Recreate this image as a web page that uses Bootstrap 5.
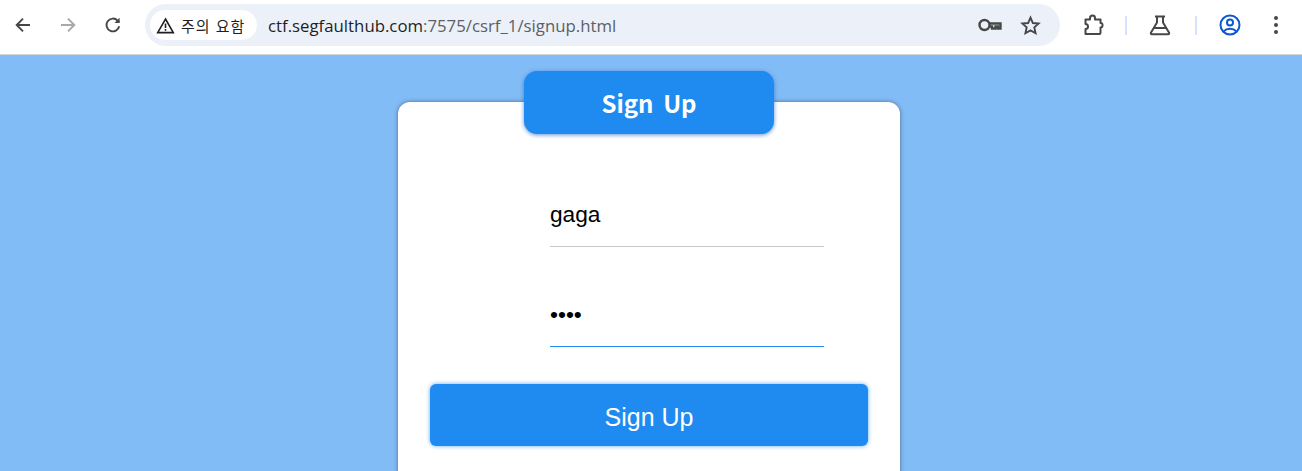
<!DOCTYPE html>
<html lang="ko">
<head>
<meta charset="UTF-8">
<meta name="viewport" content="width=device-width, initial-scale=1.0">
<title>Sign Up</title>
<link href="https://cdn.jsdelivr.net/npm/bootstrap@5.3.0/dist/css/bootstrap.min.css" rel="stylesheet">
<style>
html, body { height: 471px; overflow: hidden; }
body { background: #82bcf6; font-family: "Liberation Sans", Arial, sans-serif; }
.chrome-bar { height: 55px; background: #fff; border-bottom: 1px solid #d3d6db; padding: 0 0 4px 8px; }
.tool-btn { width: 30px; height: 30px; flex: none; }
.tool-btn svg { display: block; }
.back-btn { margin-right: 15px; }
.fwd-btn { margin-right: 15px; }
.reload-btn { margin-right: 17px; }
.omnibox { width: 915px; height: 42px; background: #ecf0f9; border-radius: 21px; padding: 0 19px 0 5px; flex: none; }
.warn-chip { height: 30px; width: 107px; background: #fff; border-radius: 15px; padding-left: 6px; margin-right: 11px; font: 15px "Noto Sans CJK KR", sans-serif; letter-spacing: 1px; color: #1f1f1f; white-space: nowrap; flex: none; }
.warn-chip svg { margin-right: 6px; flex: none; }
.url-text { font: 16.8px "Open Sans", sans-serif; color: #5c5f66; }
.url-text b { font-weight: 400; color: #1f1f1f; }
.key-icon { margin-right: 18px; }
.right-tools { margin-left: 21px; }
.puzzle-icon { margin-right: 20px; }
.flask-icon { margin: 0 23px 0 21px; }
.profile-icon { margin: 0 31px 0 21px; }
.tool-sep { width: 2px; height: 19px; background: #d3e3fd; flex: none; }
.page-area { height: 416px; overflow: hidden; }
.signup-box { width: 502px; height: 420px; margin: 47px 0 0 398px; background: #fff; border-radius: 12px; box-shadow: 0 0 4px rgba(40,50,70,.6); position: relative; padding-top: 91px; }
.tab-head { position: absolute; left: 126px; top: -31px; width: 250px; height: 63px; background: #1f8aef; color: #fff; border-radius: 13px; box-shadow: 0 1px 4px rgba(31,100,200,.7); font: 700 24px/64px "Noto Sans CJK KR", sans-serif; word-spacing: 3px; }
.field-wrap { width: 274px; margin-left: 152px; height: 54px; border-bottom: 1px solid #c9c9c9; margin-bottom: 46px; }
.field-wrap input { width: 100%; border: 0; outline: 0; background: none; padding: 0; color: #000; font: 22.7px/42px "Liberation Sans", sans-serif; display: block; }
.field-focus { border-bottom-color: #1f8aef; }
.submit-btn { display: block; width: 438px; height: 62px; margin: -9px 0 0 32px; padding: 4px 0 0; background: #1f8aef; border: 0; border-radius: 6px; color: #fff; font: 25px "Liberation Sans", sans-serif; box-shadow: 0 0 4px rgba(31,138,239,.7); }
.submit-btn:hover { background: #1f8aef; color: #fff; }
</style>
</head>
<body>
<div class="chrome-bar d-flex align-items-center">
  <div class="tool-btn back-btn d-flex align-items-center justify-content-center">
    <svg width="20" height="20" viewBox="0 0 20 20" fill="none" stroke="#474747" stroke-width="1.9"><path d="M17 10H4M10 3.700 3.700 10l6.300 6.300"/></svg>
  </div>
  <div class="tool-btn fwd-btn d-flex align-items-center justify-content-center">
    <svg width="20" height="20" viewBox="0 0 20 20" fill="none" stroke="#a8a8a8" stroke-width="1.9"><path d="M3 10h13M10 3.700l6.300 6.300-6.300 6.300"/></svg>
  </div>
  <div class="tool-btn reload-btn d-flex align-items-center justify-content-center">
    <svg width="20" height="20" viewBox="0 0 20 20" fill="none" stroke="#474747" stroke-width="1.9"><path d="M16.200 11.200a6.400 6.400 0 1 1-1.600-5.600l1.600 1.700"/><path d="M16.600 2.800v5.100h-5.100" fill="#474747" stroke="none"/></svg>
  </div>
  <div class="omnibox d-flex align-items-center">
    <div class="warn-chip d-flex align-items-center">
      <svg width="19" height="17" viewBox="0 0 19 17" fill="none" stroke="#1f1f1f" stroke-width="1.600"><path d="M9.500 2 17.300 15.600H1.700z"/><path d="M9.500 6.500v4.500M9.500 12v1.700"/></svg>
      <span>주의 요함</span>
    </div>
    <div class="url-text flex-grow-1"><b>ctf.segfaulthub.com</b>:7575/csrf_1/signup.html</div>
    <svg class="key-icon" width="24" height="16" viewBox="0 0 24 16" fill="none" stroke="#474747" stroke-width="2.400"><circle cx="6.500" cy="8" r="5"/><path d="M11.500 6.500h11v5h-2.500v-2h-2.500v2H14v-2h-2.500"/></svg>
    <svg width="21" height="21" viewBox="0 0 22 22" fill="none" stroke="#474747" stroke-width="2"><path d="m11 2.700 2.500 5.700 6 .6-4.500 4 1.300 6.100L11 16.100l-5.300 3 1.300-6.100-4.500-4 6-.6z"/></svg>
  </div>
  <div class="right-tools d-flex align-items-center">
    <svg class="puzzle-icon" width="24" height="24" viewBox="0 0 24 24" fill="none" stroke="#474747" stroke-width="2" stroke-linejoin="round"><path d="M4.500 6.500H9V5a2.500 2.500 0 0 1 5 0v1.500h5.500V10a2 2 0 0 1 2 2.500 2 2 0 0 1-2 2V20a1 1 0 0 1-1 1H4.500V16a2.500 2.500 0 0 0 0-5z"/></svg>
    <div class="tool-sep"></div>
    <svg class="flask-icon" width="24" height="24" viewBox="0 0 24 24" fill="none" stroke="#474747" stroke-width="2"><path d="M7 3.500h10M9 3.500v6L2.900 19.700a1 1 0 0 0 .9 1.500h16.400a1 1 0 0 0 .9-1.500L15 9.500v-6M6 15h12"/></svg>
    <div class="tool-sep"></div>
    <svg class="profile-icon" width="24" height="24" viewBox="0 0 24 24" fill="none" stroke="#0b57d0" stroke-width="2"><circle cx="12" cy="12" r="9.500"/><circle cx="12" cy="9.500" r="3"/><path d="M5.500 18.500c3.500-3.600 9.500-3.600 13 0"/></svg>
    <svg width="6" height="20" viewBox="0 0 6 20" fill="#474747"><circle cx="3" cy="3" r="2"/><circle cx="3" cy="10" r="2"/><circle cx="3" cy="17" r="2"/></svg>
  </div>
</div>

<div class="page-area">
  <div class="signup-box">
    <div class="tab-head text-center">Sign Up</div>
    <form>
      <div class="field-wrap"><input type="text" value="gaga"></div>
      <div class="field-wrap field-focus"><input type="password" value="aaaa"></div>
      <button type="button" class="btn submit-btn">Sign Up</button>
    </form>
  </div>
</div>
<script src="https://cdn.jsdelivr.net/npm/bootstrap@5.3.0/dist/js/bootstrap.bundle.min.js"></script>
</body>
</html>
